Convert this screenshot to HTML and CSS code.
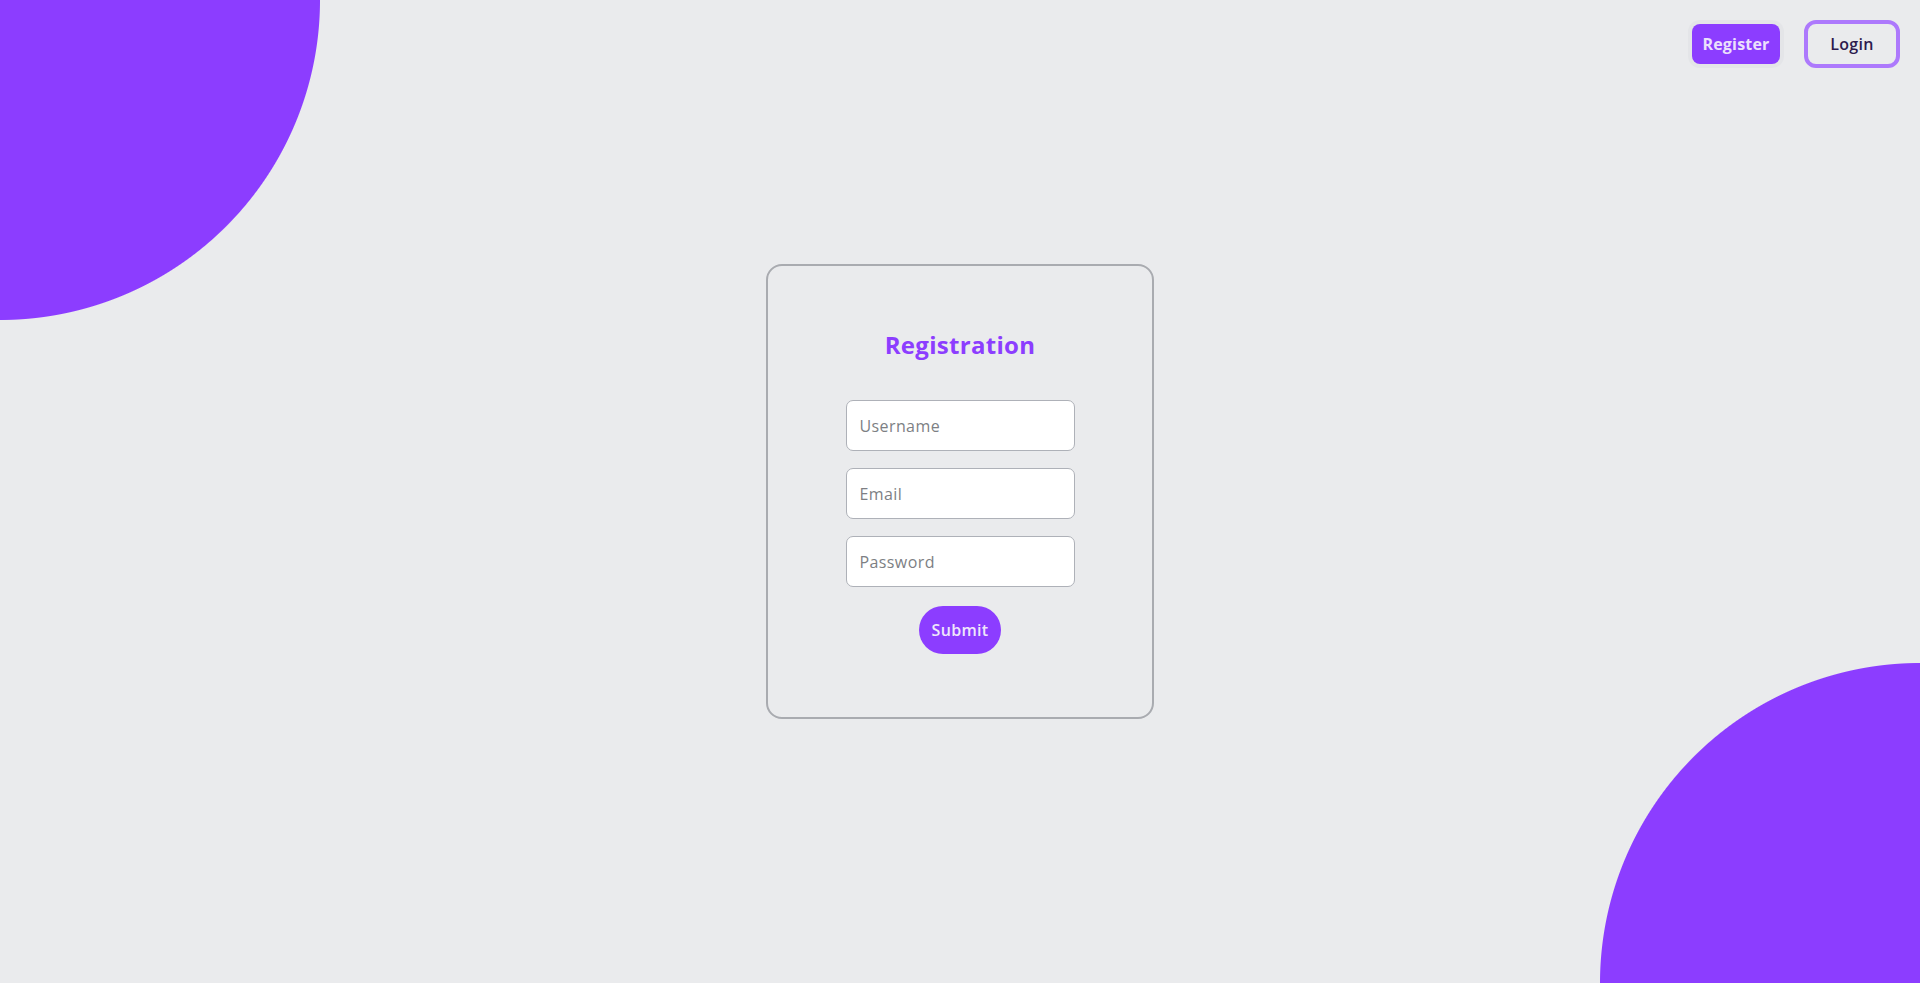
FILE: index.html
```html
<!DOCTYPE html>
<html lang="en">
<head>
<meta charset="utf-8">
<title>Registration</title>
<link rel="stylesheet" href="styles.css">
</head>
<body>
<div class="page">
  <header class="topbar">
    <button class="btn btn-register" type="button">Register</button>
    <button class="btn btn-login" type="button">Login</button>
  </header>
  <main class="card">
    <h1 class="card-title">Registration</h1>
    <form class="form">
      <input class="field" type="text" placeholder="Username">
      <input class="field" type="email" placeholder="Email">
      <input class="field" type="password" placeholder="Password">
      <button class="submit" type="button">Submit</button>
    </form>
  </main>
  <div class="spacer"></div>
</div>
</body>
</html>
```

FILE: styles.css
```css
* { box-sizing: border-box; }

html, body {
  margin: 0;
  height: 100%;
}

body {
  font-family: "Open Sans", "Noto Sans", sans-serif;
  background-color: #eaebed;
  background-image:
    radial-gradient(circle at 0 0, #8c3dff 319.5px, rgba(140,61,255,0) 320.5px),
    radial-gradient(circle at 100% 100%, #8c3dff 319.5px, rgba(140,61,255,0) 320.5px);
  background-repeat: no-repeat;
  overflow: hidden;
}

.page {
  height: 100vh;
  display: grid;
  grid-template-rows: 1fr auto 1fr;
  justify-items: center;
}

.topbar {
  justify-self: stretch;
  align-self: start;
  display: flex;
  justify-content: flex-end;
  align-items: center;
  gap: 24px;
  padding: 20px 20px 0 0;
}

.btn {
  font-family: inherit;
  font-size: 16px;
  cursor: pointer;
  padding: 0;
}

.btn-register {
  width: 88px;
  height: 40px;
  border: none;
  border-radius: 8px;
  background: #8c3dff;
  color: #ebe0fc;
  font-weight: 700;
  letter-spacing: 0.2px;
  box-shadow: 0 0 0 4px #e4e5e8;
}

.btn-login {
  width: 96px;
  height: 48px;
  border: 4px solid #ad79fc;
  border-radius: 12px;
  background: transparent;
  color: #2d1b4e;
  font-weight: 600;
  letter-spacing: 0.3px;
}

.card {
  width: 388px;
  border: 2px solid #a9abb0;
  border-radius: 16px;
  padding: 63px 0 63px;
  display: flex;
  flex-direction: column;
  align-items: center;
}

.card-title {
  margin: 0 0 39px;
  font-size: 24px;
  line-height: 32px;
  font-weight: 700;
  letter-spacing: 0.3px;
  color: #8c3dff;
}

.form {
  width: 229px;
  display: flex;
  flex-direction: column;
  align-items: center;
  gap: 17px;
}

.field {
  width: 100%;
  height: 51px;
  border: 1px solid #aeb1b8;
  border-radius: 7px;
  background: #ffffff;
  padding: 0 13px;
  font-family: inherit;
  font-size: 16px;
  letter-spacing: 0.4px;
  color: #333;
  outline: none;
}

.field::placeholder {
  color: #7d7f84;
}

.submit {
  margin-top: 2px;
  width: 82px;
  height: 48px;
  border: none;
  border-radius: 24px;
  background: #8c3dff;
  color: #efe6fb;
  font-family: inherit;
  font-size: 16px;
  font-weight: 600;
  letter-spacing: 0.3px;
  padding: 0;
  cursor: pointer;
}
```
